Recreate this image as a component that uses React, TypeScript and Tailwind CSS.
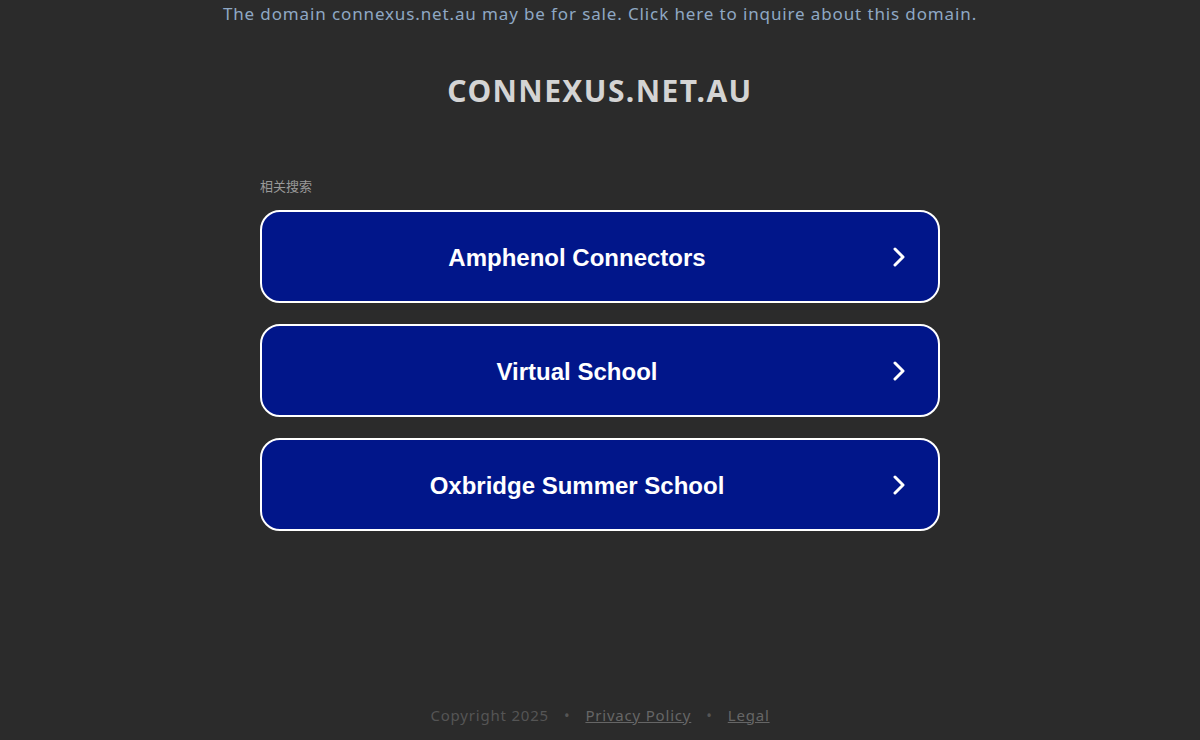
const searches = ["Amphenol Connectors", "Virtual School", "Oxbridge Summer School"];

function Chevron() {
  return (
    <svg className="w-[14px] h-[20px] shrink-0" viewBox="0 0 14 20" fill="none" stroke="white" strokeWidth={3} strokeLinecap="round" strokeLinejoin="round">
      <path d="M3 2l8 8-8 8" />
    </svg>
  );
}

export default function App() {
  return (
    <div className="min-h-[740px] bg-[#2b2b2b] flex flex-col items-center font-['Noto_Sans',sans-serif]">
      <a className="mt-[2px] text-[17px] leading-[24px] tracking-[0.87px] text-[#8fa8c4] cursor-pointer">
        The domain connexus.net.au may be for sale. Click here to inquire about this domain.
      </a>

      <h1 className="mt-[45px] text-[30px] leading-[40px] font-bold tracking-[1.4px] text-[#d4d4d4]">CONNEXUS.NET.AU</h1>

      <div className="mt-[67px] w-[680px] flex flex-col">
        <p className="text-[13px] leading-[16px] text-[#999999] font-['Noto_Sans_CJK_SC',sans-serif]">相关搜索</p>
        <div className="mt-[16px] flex flex-col gap-[21px]">
          {searches.map((s) => (
            <div
              key={s}
              className="h-[93px] rounded-[20px] border-2 border-white bg-[#01168a] flex items-center pr-[32px] cursor-pointer"
            >
              <span className="flex-1 text-center text-white text-[24px] leading-[30px] pt-[2px] font-bold font-['Liberation_Sans',Arial,sans-serif]">
                {s}
              </span>
              <Chevron />
            </div>
          ))}
        </div>
      </div>

      <div className="mt-auto mb-[14px] flex items-center gap-[15px] text-[15px] tracking-[0.8px] text-[#555555]">
        <span>Copyright 2025</span>
        <span>•</span>
        <a className="underline cursor-pointer text-[#666666]">Privacy Policy</a>
        <span>•</span>
        <a className="underline cursor-pointer text-[#666666]">Legal</a>
      </div>
    </div>
  );
}
